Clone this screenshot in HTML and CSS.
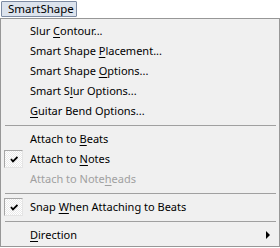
FILE: index.html
```html
<!DOCTYPE html>
<html lang="en">
<head>
    <meta charset="UTF-8">
    <title>SmartShape Menu</title>
    <link rel="stylesheet" href="styles.css">
</head>
<body>
    <!-- Menu bar title -->
    <div class="menubar">
        <span class="menu-title">SmartShape</span>
    </div>

    <!-- Drop-down panel -->
    <div class="menu">
        <div class="item"><span class="gutter"></span><span class="label">Slur <u>C</u>ontour...</span></div>
        <div class="item"><span class="gutter"></span><span class="label">Smart Shape <u>P</u>lacement...</span></div>
        <div class="item"><span class="gutter"></span><span class="label">Smart Shape <u>O</u>ptions...</span></div>
        <div class="item"><span class="gutter"></span><span class="label">Smart S<u>l</u>ur Options...</span></div>
        <div class="item"><span class="gutter"></span><span class="label"><u>G</u>uitar Bend Options...</span></div>

        <div class="separator"></div>

        <div class="item"><span class="gutter"></span><span class="label">Attach to <u>B</u>eats</span></div>
        <div class="item">
            <span class="gutter">
                <span class="check">
                    <svg width="8" height="7" viewBox="0 0 8 7"><path d="M1 3 L3 5.5 L7.5 1" fill="none" stroke="#000" stroke-width="1.8"/></svg>
                </span>
            </span>
            <span class="label">Attach to <u>N</u>otes</span>
        </div>
        <div class="item disabled"><span class="gutter"></span><span class="label">Attach to Note<u>h</u>eads</span></div>

        <div class="separator"></div>

        <div class="item">
            <span class="gutter">
                <span class="check">
                    <svg width="8" height="7" viewBox="0 0 8 7"><path d="M1 3 L3 5.5 L7.5 1" fill="none" stroke="#000" stroke-width="1.8"/></svg>
                </span>
            </span>
            <span class="label">Snap <u>W</u>hen Attaching to Beats</span>
        </div>

        <div class="separator"></div>

        <div class="item">
            <span class="gutter"></span>
            <span class="label"><u>D</u>irection</span>
            <span class="arrow"></span>
        </div>
    </div>
</body>
</html>
```

FILE: styles.css
```css
body {
    margin: 0;
    padding: 0;
    background-color: #ffffff;
    font-family: 'Noto Sans', 'Open Sans', sans-serif;
    font-size: 11px;
    color: #000000;
}

.menubar {
    height: 17px;
    padding: 1px 0 0 1px;
    box-sizing: border-box;
}

.menu-title {
    display: inline-block;
    box-sizing: border-box;
    height: 16px;
    width: 76px;
    padding-left: 6px;
    font-size: 11.5px;
    line-height: 14px;
    background-color: #dce3ed;
    border: 1px solid #7d8ba3;
    border-radius: 1px;
}

.menu {
    width: 280px;
    height: 229px;
    box-sizing: border-box;
    margin-top: 1px;
    padding: 2px 1px 0 1px;
    background-color: #f0f0f0;
    border: 1px solid #979797;
}

.item {
    display: flex;
    align-items: center;
    height: 20px;
    line-height: 20px;
}

.item u {
    text-underline-offset: 2px;
}

.item.disabled {
    color: #a0a0a0;
}

.gutter {
    display: flex;
    align-items: center;
    width: 28px;
    height: 20px;
    flex-shrink: 0;
}

.check {
    display: flex;
    align-items: center;
    justify-content: center;
    box-sizing: border-box;
    width: 19px;
    height: 18px;
    margin-left: 2px;
    border-top: 1px solid #a6a6a6;
    border-left: 1px solid #a6a6a6;
    border-right: 1px solid #e4e4e4;
    border-bottom: 1px solid #e4e4e4;
    background: repeating-conic-gradient(#ffffff 0 25%, #e9e9e9 0 50%) 0 0 / 2px 2px;
}

.label {
    white-space: nowrap;
}

.arrow {
    width: 0;
    height: 0;
    margin-left: auto;
    margin-right: 8px;
    border-left: 4px solid #000000;
    border-top: 4px solid transparent;
    border-bottom: 4px solid transparent;
}

.separator {
    height: 8px;
    display: flex;
    align-items: center;
    padding: 0 2px 0 3px;
}

.separator::before {
    content: "";
    flex: 1;
    height: 1px;
    background-color: #a0a0a0;
}
```
